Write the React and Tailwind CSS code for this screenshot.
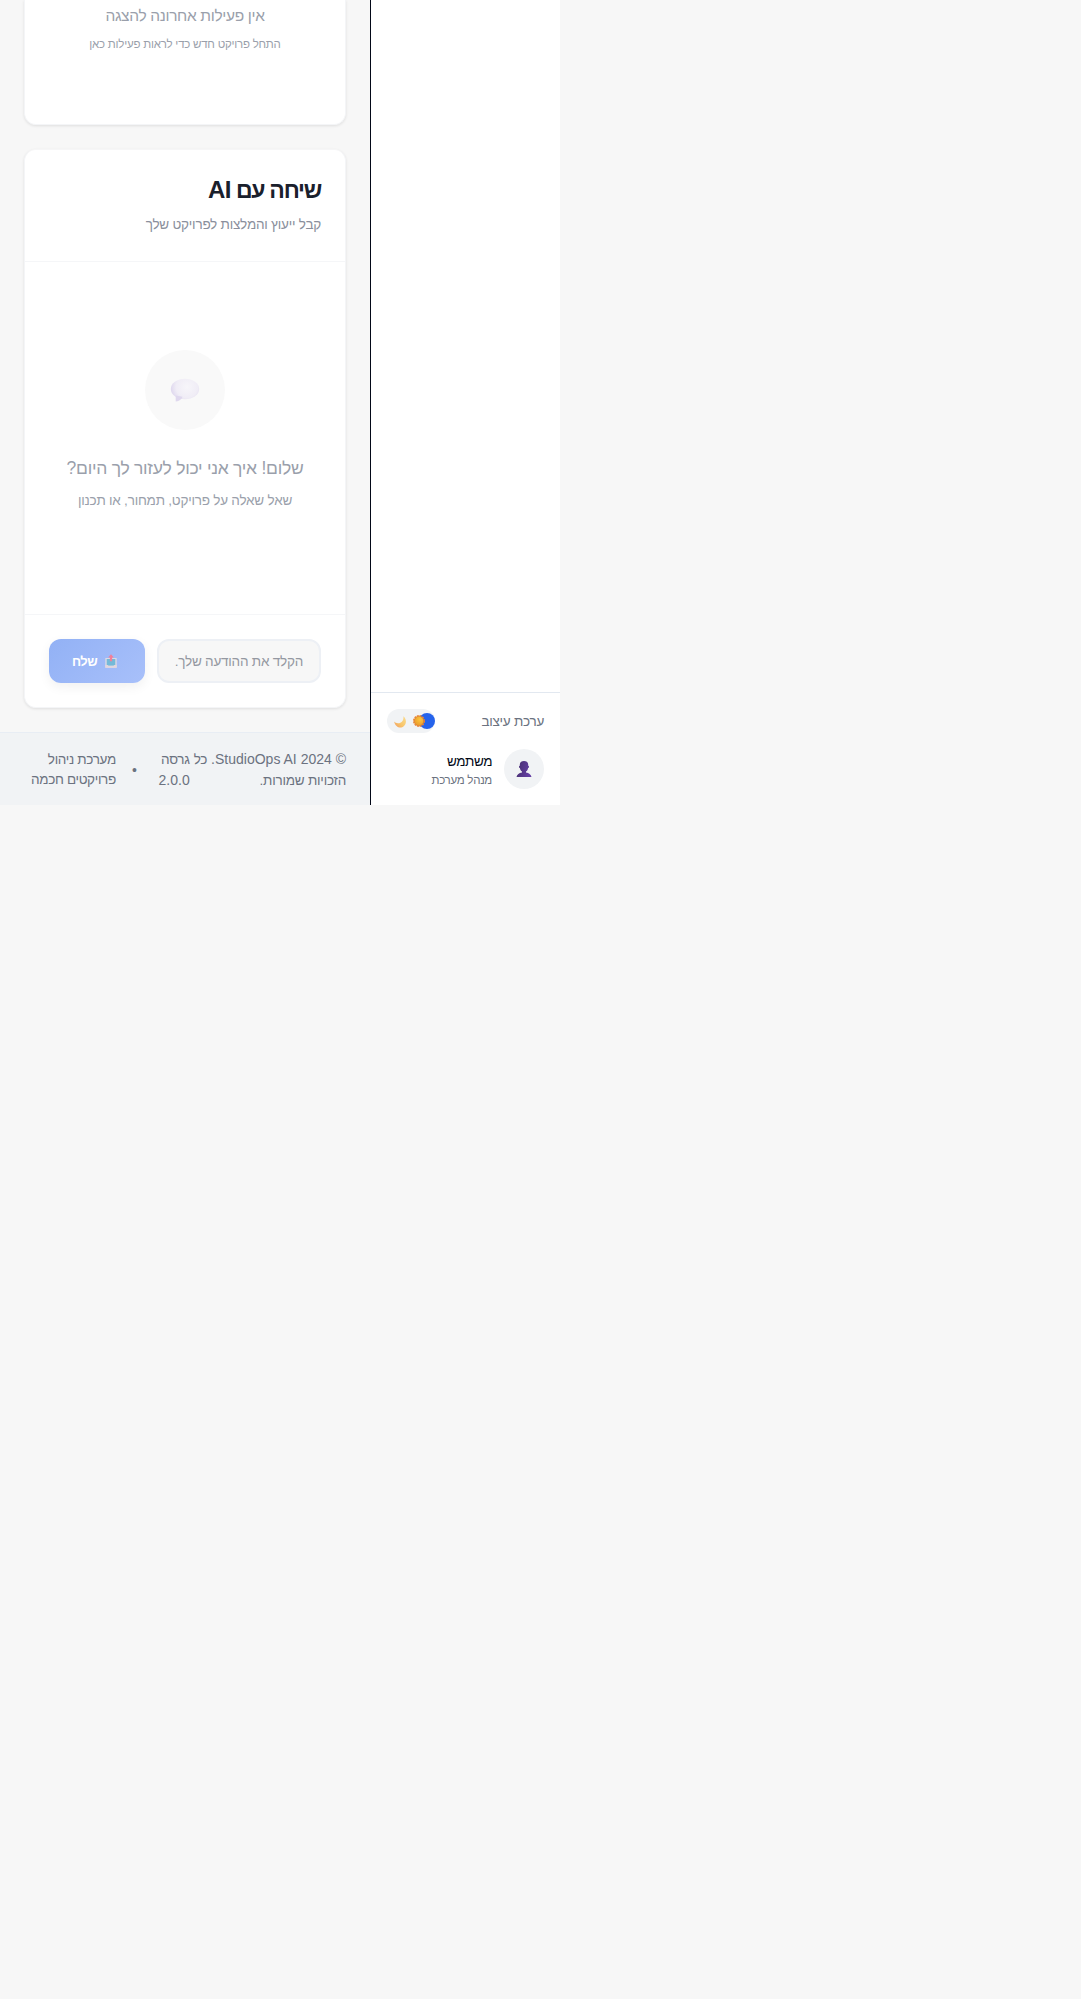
function ChatBubble() {
  return (
    <svg width="30" height="24" viewBox="0 0 30 24" className="block">
      <defs>
        <radialGradient id="bubble" gradientUnits="userSpaceOnUse" cx="17" cy="9" r="18">
          <stop offset="0" stopColor="#f7f6fa" />
          <stop offset="0.6" stopColor="#f0edf6" />
          <stop offset="1" stopColor="#dad2ec" />
        </radialGradient>
      </defs>
      <ellipse cx="15" cy="11" rx="14.200" ry="10.200" fill="url(#bubble)" />
      <path d="M5.700 17.500V23.500c2.300-.2 4.200-1 5.800-2.700l1-2z" fill="#dfd8ee" />
    </svg>
  );
}

function Outbox() {
  return (
    <svg width="12" height="14" viewBox="0 0 12 14" className="block shrink-0">
      <rect x=".3" y="4" width="11.400" height="9.800" rx=".6" fill="#dcd9e4" />
      <rect x="1.700" y="5" width="8.600" height="6.600" fill="#74b9d8" />
      <path d="M.3 11h2.400l.8 1h5l.8-1h2.400v2.800H.3z" fill="#e0d6de" />
      <path d="M6 .2 8.800 3.400H7.100V7.200H4.900V3.400H3.200z" fill="#f27f98" />
    </svg>
  );
}

function Moon() {
  return (
    <svg width="12" height="12" viewBox="0 0 12 12" className="block">
      <defs>
        <linearGradient id="moon" x1="0" y1="1" x2="1" y2="0">
          <stop offset="0" stopColor="#ee9a62" />
          <stop offset="0.45" stopColor="#f9c76c" />
          <stop offset="1" stopColor="#f8dc92" />
        </linearGradient>
      </defs>
      <path d="M9.300.2c3.200 2.500 3.500 7.200.7 9.900C6.900 13 1.600 11.900.1 5.600c1.500 1.700 4 2.200 6.200 1.200C8.900 5.600 9.900 2.800 9.300.2z" fill="url(#moon)" />
    </svg>
  );
}

function Sun() {
  return (
    <svg width="12" height="12" viewBox="0 0 12 12" className="block">
      <defs>
        <radialGradient id="sun" cx="0.6" cy="0.35" r="0.6">
          <stop offset="0" stopColor="#fdc63c" />
          <stop offset="1" stopColor="#eb9e2d" />
        </radialGradient>
      </defs>
      <circle cx="6" cy="6" r="5.300" fill="none" stroke="#ee8132" strokeWidth="1.400" strokeDasharray="1.800 .975" />
      <circle cx="6" cy="6" r="4.800" fill="url(#sun)" stroke="#dd7f2c" strokeWidth=".8" />
    </svg>
  );
}

function Person() {
  return (
    <svg width="16" height="16" viewBox="0 0 16 16" className="block">
      <defs>
        <linearGradient id="person" x1="0" y1="0" x2="1" y2="0.300">
          <stop offset="0" stopColor="#452f6b" />
          <stop offset="1" stopColor="#643fa3" />
        </linearGradient>
      </defs>
      <path
        d="M8 0c2.700 0 4.200 1.200 4.200 3.800v1c.5 0 .8.300.8.900s-.3 1.200-.9 1.300c-.3 1.700-1 2.900-2.100 3.600v.8c3 .4 4.900 1.900 5.500 4.600H.5c.6-2.700 2.500-4.200 5.500-4.600v-.8C4.900 9.900 4.200 8.700 3.900 7 3.300 6.900 3 6.300 3 5.700s.3-.9.8-.9v-1C3.800 1.200 5.300 0 8 0z"
        fill="url(#person)"
      />
    </svg>
  );
}

export default function App() {
  return (
    <div className="min-h-[1999px] w-full bg-[#f7f7f7] font-['Liberation_Sans',Arial,sans-serif]" dir="ltr">
      <div dir="rtl" className="flex h-[805px] w-[560px] overflow-hidden">
        <aside className="flex w-[190px] shrink-0 flex-col justify-end border-l border-[#020817] bg-white">
          <div className="h-[113px] border-t border-[#e2e8f0] px-4 pt-4">
            <div className="flex h-6 items-center justify-between">
              <span className="pt-0.5 text-[13.5px] leading-5 tracking-[-0.26px] whitespace-nowrap text-[#6b7280]">ערכת עיצוב</span>
              <div className="relative h-6 w-12">
                <div className="h-6 w-12 rounded-full bg-[#f1f3f5]" />
                <div className="absolute top-1 left-8 size-4 rounded-full bg-[#2563eb]" />
                <div className="absolute top-[7px] left-[7px]"><Moon /></div>
                <div className="absolute top-[6px] left-[26px]"><Sun /></div>
              </div>
            </div>
            <div className="mt-4 flex items-center gap-3">
              <div className="flex size-10 shrink-0 items-center justify-center rounded-full bg-[#f1f3f5] pb-px"><Person /></div>
              <div>
                <p className="pt-px text-[13.5px] leading-5 tracking-[-0.45px] text-[#020817]">משתמש</p>
                <p className="text-[11.5px] leading-4 tracking-[-0.27px] text-[#6b7280]">מנהל מערכת</p>
              </div>
            </div>
          </div>
        </aside>

        <div className="flex w-[370px] shrink-0 flex-col">
          <main className="flex flex-1 flex-col px-6">
            <section className="h-[125px] rounded-b-xl border border-t-0 border-[#f4f5f7] bg-white text-center text-[#9a9fab] shadow-[0_1px_3px_rgba(0,0,0,0.1)]">
              <p className="pt-1 text-[15.5px] leading-6 tracking-[-0.33px]">אין פעילות אחרונה להצגה</p>
              <p className="mt-2 text-[11.5px] leading-4 tracking-[-0.23px]">התחל פרויקט חדש כדי לראות פעילות כאן</p>
            </section>

            <section className="mt-6 flex h-[559px] flex-col rounded-xl border border-[#f4f5f7] border-t-[#f6f6f7] bg-white shadow-[0_1px_3px_rgba(0,0,0,0.1)]">
              <header className="h-[112px] shrink-0 border-b border-[#f5f6f8] px-6 pt-6">
                <h2 className="text-[23px] leading-8 font-bold tracking-[-1.25px] text-[#1a202c]">שיחה עם <span className="text-2xl leading-8 tracking-[-0.6px]">AI</span></h2>
                <p className="mt-[9px] text-[13.5px] leading-5 tracking-[-0.22px] text-[#8a8f9c]">קבל ייעוץ והמלצות לפרויקט שלך</p>
              </header>
              <div className="flex flex-1 flex-col items-center pt-[88px] text-center text-[#9a9fab]">
                <div className="flex size-20 items-center justify-center rounded-full bg-[#f9f9f9] pb-px"><ChatBubble /></div>
                <p className="mt-6 text-[17.5px] leading-7 tracking-[-0.26px]">שלום! איך אני יכול לעזור לך היום?</p>
                <p className="mt-[9px] text-[13.5px] leading-5 tracking-[-0.22px]">שאל שאלה על פרויקט, תמחור, או תכנון</p>
              </div>
              <div className="flex h-[93px] shrink-0 gap-3 border-t border-[#f5f6f8] p-6">
                <div className="flex h-11 w-[164px] items-center rounded-xl border-2 border-[#edf0f5] bg-[#f7f7f7] px-4 pt-0.5 text-[13.5px] tracking-[-0.22px] whitespace-nowrap text-[#9498a1]">הקלד את ההודעה שלך.</div>
                <button className="flex h-11 w-24 items-center justify-center gap-2 rounded-xl bg-linear-135 from-[#92b1f5] to-[#a8c0fa] pr-[5px] text-[13px] font-semibold tracking-[-0.5px] text-white shadow-[0_4px_12px_rgba(0,0,0,0.06)]">
                  <Outbox />
                  <span className="pt-0.5">שלח</span>
                </button>
              </div>
            </section>
          </main>
          <footer className="flex h-[73px] shrink-0 items-center justify-between border-t border-[#e8edf4] bg-[#f1f3f5] px-6 pt-px text-sm leading-5 whitespace-nowrap text-[#6b7280]">
            <div className="flex gap-1">
              <p>© 2024 StudioOps AI. <span className="text-[13.5px] tracking-[-0.22px]">כל<br />הזכויות שמורות.</span></p>
              <p><span className="text-[13.5px] tracking-[-0.28px]">גרסה</span><br />2.0.0</p>
            </div>
            <div className="flex items-center gap-4 pl-[7px]">
              <span>•</span>
              <p className="pt-px text-[13.5px] tracking-[-0.33px]">מערכת ניהול<br />פרויקטים חכמה</p>
            </div>
          </footer>
        </div>
      </div>
    </div>
  );
}
